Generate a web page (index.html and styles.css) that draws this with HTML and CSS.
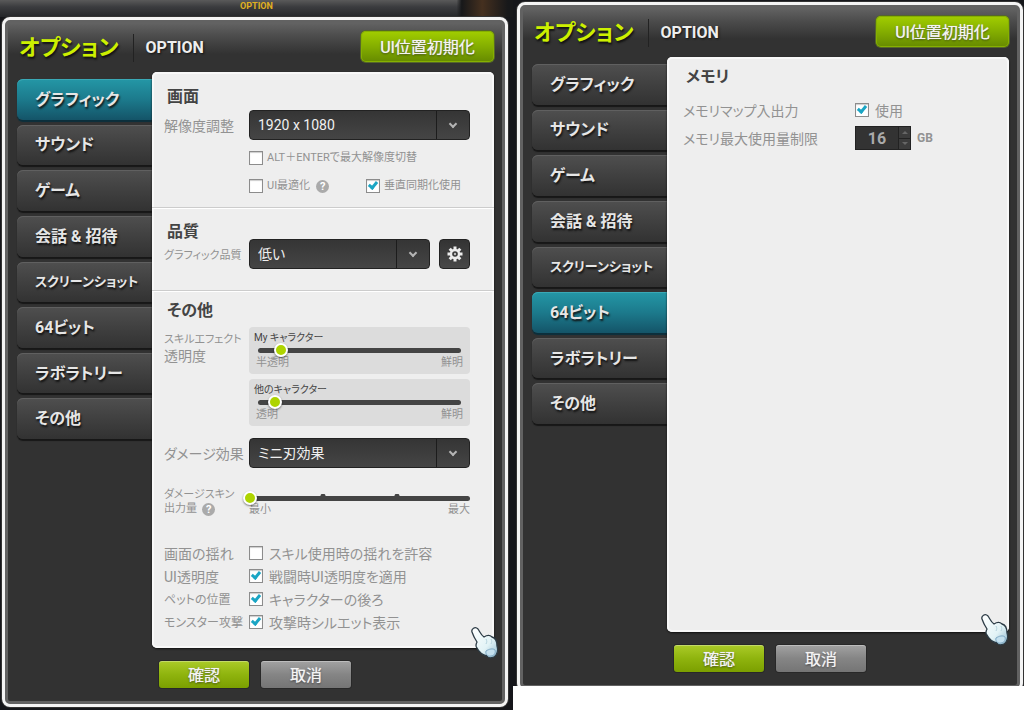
FILE: index.html
```html
<!DOCTYPE html>
<html lang="ja">
<head>
  <meta charset="utf-8">
  <meta name="viewport" content="width=device-width, initial-scale=1">
  <title>オプション</title>
  <link rel="stylesheet" href="styles.css">
</head>
<body>
  <svg width="0" height="0" class="defs" aria-hidden="true">
    <defs>
      <linearGradient id="glove" x1="0" y1="0" x2="1" y2="1">
        <stop offset="0" stop-color="#ffffff"/>
        <stop offset="0.6" stop-color="#e2f3f6"/>
        <stop offset="1" stop-color="#8fb9cf"/>
      </linearGradient>
    </defs>
    <symbol id="hand" viewBox="0 0 27 32">
      <path d="M1 5C0 2 4-1 7 2c2 3 3 6 6 8 3-2 6-2 8 0 4 1 5 5 5 9 1 3 1 6-1 9-2 3-7 4-9 1-4-1-8-4-10-8-2-2-1-4 0-6C4 12 2 8 1 5Z" fill="url(#glove)" stroke="#2d3c46" stroke-width="1.3" stroke-linejoin="round"/>
      <path d="M15 12c1 2 1 3 0 5M20 12c1 2 1 3 0 5" fill="none" stroke="#b4d2dc" stroke-width="1"/>
      <path d="M15 24c3-2 7-3 9-1 1 3-1 6-4 6-3 1-6-2-5-5Z" fill="#c4e0ee" stroke="#7fa9c4" stroke-width="1"/>
    </symbol>
    <symbol id="gear" viewBox="0 0 16 16">
      <g fill="#ededed">
        <rect x="6.5" y="0.5" width="3" height="15"/>
        <rect x="6.5" y="0.5" width="3" height="15" transform="rotate(45 8 8)"/>
        <rect x="6.5" y="0.5" width="3" height="15" transform="rotate(90 8 8)"/>
        <rect x="6.5" y="0.5" width="3" height="15" transform="rotate(135 8 8)"/>
        <circle cx="8" cy="8" r="5.2"/>
      </g>
      <circle cx="8" cy="8" r="2.8" fill="#3a3a3a"/>
      <circle cx="8" cy="8" r="1.2" fill="#bdbdbd"/>
    </symbol>
  </svg>

  <main class="scenes">
    <div class="scene scene-graphic">
      <div class="game-bar">OPTION</div>
      <section class="window">
        <header class="window-header">
          <h1>オプション</h1>
          <span class="subtitle">OPTION</span>
          <button class="btn btn-reset">UI位置初期化</button>
        </header>
        <div class="window-body">
          <nav class="tabs">
            <button class="tab active">グラフィック</button>
            <button class="tab">サウンド</button>
            <button class="tab">ゲーム</button>
            <button class="tab">会話 &amp; 招待</button>
            <button class="tab tab-long">スクリーンショット</button>
            <button class="tab">64ビット</button>
            <button class="tab">ラボラトリー</button>
            <button class="tab">その他</button>
          </nav>
          <div class="panel">
            <section class="group">
              <h2>画面</h2>
              <div class="row">
                <label for="resolution">解像度調整</label>
                <div class="select">
                  <select id="resolution"><option>1920 x 1080</option></select>
                </div>
              </div>
              <div class="screen-checks">
                <label class="check small wide"><input type="checkbox">ALT＋ENTERで最大解像度切替</label>
                <span class="with-help">
                  <label class="check small"><input type="checkbox">UI最適化</label>
                  <button class="help" aria-label="ヘルプ">?</button>
                </span>
                <label class="check small"><input type="checkbox" checked>垂直同期化使用</label>
              </div>
            </section>

            <section class="group group-quality">
              <h2>品質</h2>
              <div class="row">
                <label for="quality" class="tight">グラフィック品質</label>
                <div class="quality">
                  <div class="select">
                    <select id="quality"><option>低い</option></select>
                  </div>
                  <button class="gear" aria-label="詳細設定"><svg width="16" height="16"><use href="#gear"/></svg></button>
                </div>
              </div>
            </section>

            <section class="group group-etc">
              <h2>その他</h2>
              <div class="row row-top">
                <div class="row-label"><span class="tight">スキルエフェクト</span><br>透明度</div>
                <div class="slider-boxes">
                  <div class="slider-box">
                    <label for="mine">My キャラクター</label>
                    <div class="slider"><input type="range" id="mine" value="11"></div>
                    <div class="scale"><span>半透明</span><span>鮮明</span></div>
                  </div>
                  <div class="slider-box">
                    <label for="others">他のキャラクター</label>
                    <div class="slider"><input type="range" id="others" value="8"></div>
                    <div class="scale"><span>透明</span><span>鮮明</span></div>
                  </div>
                </div>
              </div>
              <div class="row row-damage">
                <label for="damage">ダメージ効果</label>
                <div class="select">
                  <select id="damage"><option>ミニ刃効果</option></select>
                </div>
              </div>
              <div class="row row-top row-skin">
                <div class="skin-label tight">
                  <label for="skin">ダメージスキン<br>出力量</label>
                  <button class="help" aria-label="ヘルプ">?</button>
                </div>
                <div class="skin-slider">
                  <div class="slider ticks"><input type="range" id="skin" value="0"></div>
                  <div class="scale"><span>最小</span><span>最大</span></div>
                </div>
              </div>
              <div class="check-rows">
                <div class="row"><span>画面の揺れ</span><label class="check"><input type="checkbox">スキル使用時の揺れを許容</label></div>
                <div class="row"><span>UI透明度</span><label class="check"><input type="checkbox" checked>戦闘時UI透明度を適用</label></div>
                <div class="row"><span class="snug">ペットの位置</span><label class="check"><input type="checkbox" checked>キャラクターの後ろ</label></div>
                <div class="row"><span class="snug">モンスター攻撃</span><label class="check"><input type="checkbox" checked>攻撃時シルエット表示</label></div>
              </div>
            </section>
            <svg class="hand" width="27" height="32" aria-hidden="true"><use href="#hand"/></svg>
          </div>
        </div>
        <footer class="window-footer">
          <button class="btn btn-ok">確認</button>
          <button class="btn btn-cancel">取消</button>
        </footer>
      </section>
    </div>

    <div class="scene scene-memory">
      <section class="window">
        <header class="window-header">
          <h1>オプション</h1>
          <span class="subtitle">OPTION</span>
          <button class="btn btn-reset">UI位置初期化</button>
        </header>
        <div class="window-body">
          <nav class="tabs">
            <button class="tab">グラフィック</button>
            <button class="tab">サウンド</button>
            <button class="tab">ゲーム</button>
            <button class="tab">会話 &amp; 招待</button>
            <button class="tab tab-long">スクリーンショット</button>
            <button class="tab active">64ビット</button>
            <button class="tab">ラボラトリー</button>
            <button class="tab">その他</button>
          </nav>
          <div class="panel panel-memory">
            <h2>メモリ</h2>
            <div class="row">
              <span>メモリマップ入出力</span>
              <label class="check"><input type="checkbox" checked>使用</label>
            </div>
            <div class="row">
              <label for="memory">メモリ最大使用量制限</label>
              <div class="memory">
                <div class="number">
                  <input type="number" id="memory" value="16">
                  <div class="spin">
                    <button class="up" aria-label="増やす"></button>
                    <button class="down" aria-label="減らす"></button>
                  </div>
                </div>
                <span class="unit">GB</span>
              </div>
            </div>
            <svg class="hand" width="27" height="32" aria-hidden="true"><use href="#hand"/></svg>
          </div>
        </div>
        <footer class="window-footer">
          <button class="btn btn-ok">確認</button>
          <button class="btn btn-cancel">取消</button>
        </footer>
      </section>
    </div>
  </main>
</body>
</html>
```

FILE: styles.css
```css
* {
  box-sizing: border-box;
}

body {
  margin: 0;
  background: #fff;
  color: #929292;
  font-family: Roboto, "Noto Sans CJK JP", sans-serif;
  font-size: 14px;
  font-feature-settings: "palt";
}

button,
input,
select {
  font: inherit;
  font-feature-settings: inherit;
  margin: 0;
}

button {
  padding: 0;
  border: 0;
  cursor: pointer;
}

h1,
h2 {
  margin: 0;
}

.defs {
  position: absolute;
}

.scenes {
  display: grid;
  grid-template-columns: 513fr 511fr;
  align-items: start;
}

.scene {
  background: #15161a;
  overflow: hidden;
}

.scene-graphic {
  min-height: 100vh;
  padding: 0 5px 3px 2px;
}

.scene-memory {
  max-height: 686px;
  padding: 2px 1px 0 4px;
}

.game-bar {
  height: 17px;
  margin: 0 -5px 0 -2px;
  background: linear-gradient(90deg, transparent 89%, #17181a 90%, #45301f 94%, #17181a 99%), linear-gradient(#5a5a5a, #3b3c3f 40%, #242629);
  color: #e0b020;
  font-size: 9px;
  font-weight: bold;
  line-height: 13px;
  text-align: center;
}

/* window frame */

.window {
  border: 3px solid #f4f4f4;
  border-radius: 8px;
  padding: 0 9px 16px;
  background: linear-gradient(#686868, #4c4c4c 16px, #323232 34px);
  box-shadow: inset 0 0 0 3px #626262, 0 0 0 1px #333;
}

.window-header {
  display: flex;
  align-items: center;
  height: 52px;
  padding: 3px 0 0 5px;
}

.window-header h1 {
  padding-right: 14px;
  border-right: 1px solid #222;
  color: #cdf000;
  font-size: 22px;
  font-weight: bold;
  line-height: 28px;
  text-shadow: 1px 2px 2px #111;
}

.subtitle {
  padding-left: 12px;
  color: #eee;
  font-size: 16px;
  font-weight: bold;
  text-shadow: 1px 1px 2px #111;
}

.window-body {
  display: flex;
  align-items: flex-start;
  padding: 0 2px 0 3px;
}

.window-footer {
  display: flex;
  gap: 12px;
  padding: 13px 0 0 145px;
}

.btn {
  width: 90px;
  height: 27px;
  padding-bottom: 2px;
  border-radius: 3px;
  color: #f4f4f4;
  font-size: 16px;
  text-shadow: 0 0 1px #ddd, 0 1px 2px rgba(0, 0, 0, 0.6);
  box-shadow: 0 0 0 1px #282828, inset 0 1px 0 rgba(255, 255, 255, 0.3);
}

.btn-reset {
  width: 133px;
  height: 31px;
  margin: 0 2px 2px auto;
  border-radius: 5px;
  background: linear-gradient(#a2ce00, #84ae00 50%, #668a00);
  box-shadow: 0 0 0 1px #55662a, inset 0 0 0 1px #86b000;
}

.btn-ok {
  background: linear-gradient(#abcb28, #8fb40e 50%, #7b9f00);
}

.btn-cancel {
  background: linear-gradient(#a2a2a2, #858585 50%, #757575);
}

/* tabs */

.tabs {
  display: grid;
  grid-auto-rows: 1fr;
  gap: 5px;
  flex: none;
  width: 135px;
  height: 360px;
  margin-top: 7px;
}

.tab {
  padding: 0 0 3px 18px;
  border-radius: 6px 0 0 6px;
  background: linear-gradient(#4f4f4f, #404040 50%, #323232);
  color: #e6e6e6;
  font-size: 16px;
  font-weight: bold;
  text-align: left;
  white-space: nowrap;
  text-shadow: 1px 2px 2px #111;
  box-shadow: 0 2px 1px #171717, inset 0 1px 0 #606060;
}

.tab-long {
  font-size: 13px;
}

.tab.active {
  background: linear-gradient(#2497a6, #1c7a8c 50%, #145468);
  box-shadow: 0 2px 1px #0b2f3c, inset 0 1px 0 #3aa9b6;
}

/* panel */

.panel {
  position: relative;
  flex: 1;
  min-width: 0;
  min-height: 575px;
  border-radius: 5px;
  background: #eee;
  box-shadow: inset 0 0 0 2px #f8f8f8, 0 1px 2px #111;
}

.panel h2 {
  padding-left: 3px;
  color: #444;
  font-size: 16px;
  line-height: 16px;
}

.group {
  padding: 17px 24px 13px 12px;
  border-bottom: 1px solid #ccc;
  box-shadow: 0 1px 0 #fff;
}

.group h2 {
  margin-bottom: 5px;
}

.row {
  display: grid;
  grid-template-columns: 85px 1fr;
  align-items: center;
  white-space: nowrap;
}

.row-top {
  align-items: start;
}

.tight {
  font-size: 11px;
}

.snug {
  font-size: 12px;
}

.select {
  position: relative;
  flex: 1;
}

.select select {
  display: block;
  width: 100%;
  height: 30px;
  padding: 0 34px 0 8px;
  border: 1px solid #222;
  border-radius: 4px;
  appearance: none;
  background: linear-gradient(90deg, transparent calc(100% - 33px), #1c1c1c calc(100% - 33px), #1c1c1c calc(100% - 32px), transparent calc(100% - 32px)), linear-gradient(#353535, #454545);
  color: #f0f0f0;
}

.select::after {
  content: "";
  position: absolute;
  top: 11px;
  right: 14px;
  width: 4px;
  height: 4px;
  border: solid #b4b4b4;
  border-width: 0 2px 2px 0;
  transform: rotate(45deg);
  pointer-events: none;
}

.check {
  display: flex;
  align-items: center;
  gap: 6px;
  white-space: nowrap;
}

.check input {
  flex: none;
  width: 14px;
  height: 14px;
  border: 1px solid #8c8c8c;
  appearance: none;
  background: #fff;
  box-shadow: inset 0 1px 1px #ccc;
}

.check input:checked::after {
  content: "";
  display: block;
  width: 3px;
  height: 6px;
  margin: 0 0 0 3px;
  border: solid #1aa5c4;
  border-width: 0 3px 3px 0;
  transform: rotate(40deg);
}

.small {
  gap: 4px;
  font-size: 11px;
  line-height: 16px;
}

.screen-checks {
  display: grid;
  grid-template-columns: 117px 1fr;
  row-gap: 12px;
  margin: 10px 0 0 85px;
}

.wide {
  grid-column: span 2;
}

.with-help {
  display: flex;
  align-items: center;
  gap: 6px;
}

.help {
  width: 13px;
  height: 13px;
  border-radius: 50%;
  background: #aaa;
  color: #fff;
  font-size: 11px;
  font-weight: bold;
  line-height: 13px;
}

.group-quality {
  padding: 16px 24px 21px 12px;
}

.group-quality h2 {
  margin-bottom: -1px;
}

.quality {
  display: flex;
  gap: 9px;
}

.gear {
  display: grid;
  place-items: center;
  width: 31px;
  height: 30px;
  border: 1px solid #222;
  border-radius: 4px;
  background: linear-gradient(#333, #484848);
}

.group-etc {
  padding: 12px 24px 15px 12px;
  border-bottom: 0;
  box-shadow: none;
}

.group-etc h2 {
  margin-bottom: 8px;
}

.row-label {
  padding-top: 3px;
  line-height: 17px;
}

.slider-boxes {
  display: grid;
  gap: 5px;
}

.slider-box {
  padding: 5px 5px 6px;
  border-radius: 4px;
  background: #dcdcdc;
  line-height: 12px;
}

.slider-box label {
  display: block;
  color: #444;
  font-size: 10px;
}

.slider-box .slider {
  margin: 0 4px;
}

.slider {
  position: relative;
  height: 12px;
}

.slider::before {
  content: "";
  position: absolute;
  inset: 4px 0 3px;
  border-radius: 3px;
  background: #444;
}

.ticks::after {
  content: "";
  position: absolute;
  inset: 2px 0 auto;
  height: 4px;
  background: radial-gradient(circle at 74px 2px, #444 2px, transparent 3px), radial-gradient(circle at 148px 2px, #444 2px, transparent 3px);
}

.slider input {
  position: relative;
  z-index: 1;
  display: block;
  width: calc(100% + 12px);
  height: 12px;
  margin: 0 -6px;
  appearance: none;
  background: none;
}

.slider input::-webkit-slider-thumb {
  width: 14px;
  height: 14px;
  border: 2px solid #fff;
  border-radius: 50%;
  appearance: none;
  background: #aed400;
  box-shadow: 0 1px 2px rgba(0, 0, 0, 0.5);
}

.scale {
  display: flex;
  justify-content: space-between;
  padding: 1px 2px 0;
  font-size: 11px;
  line-height: 12px;
}

.slider-box .scale {
  margin-bottom: -1px;
}

.row-damage {
  margin-top: 12px;
}

.row-skin {
  margin-top: 20px;
}

.skin-label {
  display: flex;
  align-items: flex-end;
  line-height: 14px;
}

.skin-label .help {
  margin-left: -32px;
}

.skin-slider {
  padding-top: 4px;
}

.skin-slider .scale {
  padding: 0;
}

.check-rows {
  margin-top: 25px;
}

.check-rows .row {
  height: 23px;
}

/* memory */

.panel-memory {
  padding: 12px 16px;
}

.panel-memory .row {
  grid-template-columns: 172px 1fr;
  height: 28px;
}

.panel-memory h2 {
  margin-bottom: 11px;
}

.memory {
  display: flex;
  align-items: center;
  gap: 6px;
}

.number {
  display: flex;
  width: 56px;
  height: 24px;
  border: 1px solid #222;
  background: #333;
}

.number input {
  flex: 1;
  min-width: 0;
  padding: 0;
  border: 0;
  appearance: textfield;
  background: none;
  color: #aaa;
  font-size: 16px;
  font-weight: bold;
  text-align: center;
}

.number input::-webkit-inner-spin-button {
  display: none;
}

.spin {
  display: grid;
  width: 12px;
  border-left: 1px solid #222;
}

.spin button {
  display: grid;
  place-items: center;
  background: #3c3c3c;
}

.spin button::before {
  content: "";
  border: 3px solid transparent;
}

.spin .up::before {
  border-top: 0;
  border-bottom-color: #666;
}

.spin .down {
  border-top: 1px solid #222;
}

.spin .down::before {
  border-bottom: 0;
  border-top-color: #666;
}

.unit {
  font-size: 12px;
  font-weight: bold;
}

.hand {
  position: absolute;
  right: -4px;
  bottom: -11px;
}

.panel-memory .hand {
  right: 1px;
  bottom: -14px;
}
```
